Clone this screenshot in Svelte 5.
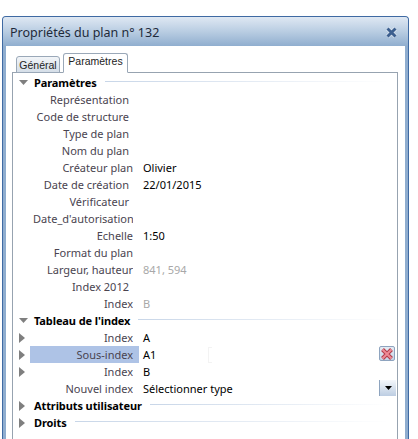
<script>
  const params = [
    ['Représentation', '', 's'], ['Code de structure', '', 's'], ['Type de plan', '', 's'], ['Nom du plan', '', 's'],
    ['Créateur plan', 'Olivier', ''], ['Date de création', '22/01/2015', 's'], ['Vérificateur', '', 's'],
    ["Date_d'autorisation", '', ''], ['Echelle', '1:50', ''], ['Format du plan', '', ''],
    ['Largeur, hauteur', '841, 594', 'g'], ['Index 2012', '', 's'], ['Index', 'B', 'g']
  ];
</script>

<div class="window">
  <header class="title">
    <span class="caption">Propriétés du plan n° 132</span>
    <svg class="close" width="11" height="11" viewBox="0 0 11 11">
      <path d="M1.500 1.500 9.500 9.500M9.500 1.500 1.500 9.500" stroke="#fff" stroke-opacity=".6" stroke-width="4.200"/>
      <path d="M1.500 1.500 9.500 9.500M9.500 1.500 1.500 9.500" stroke="#3c5f8f" stroke-width="3"/>
    </svg>
  </header>
  <div class="body">
    <div class="tabs">
      <span class="tab">Général</span>
      <span class="tab active">Paramètres</span>
    </div>
    <div class="panel">
      <div class="section">
        <svg class="arrow" width="9" height="9" viewBox="0 0 9 9"><path d="M0 2h9L4.500 7z" fill="#7f7f7f"/></svg>
        <b>Paramètres</b><i></i>
      </div>
      {#each params as [label, value, kind]}
        <div class="row">
          <span class="label" class:short={kind !== '' && kind !== 'g'}>{label}</span>
          <span class="value" class:grey={kind === 'g'}>{value}</span>
        </div>
      {/each}
      <div class="section">
        <svg class="arrow" width="9" height="9" viewBox="0 0 9 9"><path d="M0 2h9L4.500 7z" fill="#7f7f7f"/></svg>
        <b>Tableau de l'index</b><i></i>
      </div>
      <div class="row">
        <svg class="arrow" width="6" height="10" viewBox="0 0 6 10"><path d="M0 0l6 5-6 5z" fill="#7f7f7f"/></svg>
        <span class="label">Index</span><span class="value">A</span>
      </div>
      <div class="row">
        <svg class="arrow" width="6" height="10" viewBox="0 0 6 10"><path d="M0 0l6 5-6 5z" fill="#7f7f7f"/></svg>
        <span class="label selected">Sous-index</span><span class="value">A1</span>
        <span class="ghost"></span>
        <span class="del">
          <svg width="12" height="12" viewBox="0 0 12 12">
            <path d="M1.500 1.500 10.500 10.500M10.500 1.500 1.500 10.500" stroke="#b03a48" stroke-width="4"/>
            <path d="M1.500 1.500 10.500 10.500M10.500 1.500 1.500 10.500" stroke="#ee8a94" stroke-width="2"/>
          </svg>
        </span>
      </div>
      <div class="row">
        <svg class="arrow" width="6" height="10" viewBox="0 0 6 10"><path d="M0 0l6 5-6 5z" fill="#7f7f7f"/></svg>
        <span class="label">Index</span><span class="value">B</span>
      </div>
      <div class="row">
        <span class="label">Nouvel index</span><span class="value">Sélectionner type</span>
        <span class="drop"><svg width="7" height="4" viewBox="0 0 7 4"><path d="M0 0h7L3.500 4z" fill="#000"/></svg></span>
      </div>
      <div class="section">
        <svg class="arrow" width="6" height="10" viewBox="0 0 6 10"><path d="M0 0l6 5-6 5z" fill="#7f7f7f"/></svg>
        <b>Attributs utilisateur</b><i></i>
      </div>
      <div class="section">
        <svg class="arrow" width="6" height="10" viewBox="0 0 6 10"><path d="M0 0l6 5-6 5z" fill="#7f7f7f"/></svg>
        <b>Droits</b><i></i>
      </div>
    </div>
  </div>
</div>

<style>
  :global(body) { margin: 0; background: #fff; overflow: hidden; }
  .window {
    box-sizing: border-box;
    width: 407px;
    height: 423px;
    margin: 16px 0 0 2px;
    border: 1px solid #3f6aa3;
    border-bottom: 0;
    border-radius: 4px 4px 0 0;
    background: #8fadcf;
    font: 11px "Noto Sans", sans-serif;
    display: flex;
    flex-direction: column;
  }
  .title {
    height: 29px;
    flex: none;
    display: flex;
    align-items: center;
    justify-content: space-between;
    padding: 0 11px 0 7px;
    background: linear-gradient(#dfe8f3, #b9cde2 50%, #90aecf);
    border-radius: 3px 3px 0 0;
  }
  .caption { font-size: 12.500px; color: #1e2a3a; padding-top: 2px; }
  .close { margin-top: 2px; }
  .body {
    flex: 1;
    margin: 0 3px;
    background: #fff;
    padding: 8px 7px 0 6px;
    display: flex;
    flex-direction: column;
  }
  .tabs { display: flex; align-items: flex-end; height: 19px; padding-left: 4px; gap: 3px; margin-bottom: -1px; position: relative; z-index: 1; }
  .tab {
    box-sizing: border-box;
    height: 17px;
    width: 44px;
    border: 1px solid #9aa8b8;
    border-radius: 3px 3px 0 0;
    background: linear-gradient(#f2f5f8, #d5dee8);
    text-align: center;
    font: 10.500px/16px "Liberation Sans", sans-serif;
    color: #222;
  }
  .tab.active {
    height: 20px;
    width: 65px;
    background: #fff;
    border-bottom-color: #fff;
    line-height: 15px;
  }
  .panel {
    flex: 1;
    border: 1px solid #97a3b0;
    border-bottom: 0;
    padding-top: 1px;
  }
  .section, .row { height: 17px; position: relative; display: flex; align-items: center; }
  .section b { font-size: 11px; letter-spacing: -0.1px; color: #000; margin-left: 21px; white-space: nowrap; }
  .section i { flex: 1; height: 1px; margin: 0 8px 3px 8px; background: linear-gradient(to right, #c8d6e8, #fff); }
  .arrow { position: absolute; left: 6px; top: 4px; }
  .label {
    box-sizing: border-box;
    width: 100px;
    margin-left: 20px;
    flex: none;
    overflow: hidden;
    white-space: nowrap;
    text-align: right;
    color: #4a4450;
  }
  .label.short { padding-right: 4px; }
  .label.selected { width: 109px; margin-left: 17px; padding-right: 6px; background: #aec3e6; line-height: 17px; }
  .value { margin-left: 10px; white-space: nowrap; color: #000; }
  .label.selected + .value { margin-left: 4px; }
  .value.grey { color: #a8a8a8; }
  .ghost { position: absolute; left: 195px; top: 1px; width: 3px; height: 14px; border: 1px solid #f3f3f3; border-right: 0; }
  .del {
    position: absolute; right: 2px; top: 0;
    box-sizing: border-box; width: 16px; height: 15px;
    display: flex; align-items: center; justify-content: center;
    border: 1px solid #8ea4bf; border-radius: 2px;
    background: linear-gradient(#e6ecf4, #c5d3e5);
  }
  .drop {
    position: absolute; right: 1px; top: 0;
    box-sizing: border-box; width: 17px; height: 16px;
    display: flex; align-items: center; justify-content: center;
    border-left: 1px solid #8ea4bf;
    background: linear-gradient(#f4f7fb, #bccde2);
  }
</style>
